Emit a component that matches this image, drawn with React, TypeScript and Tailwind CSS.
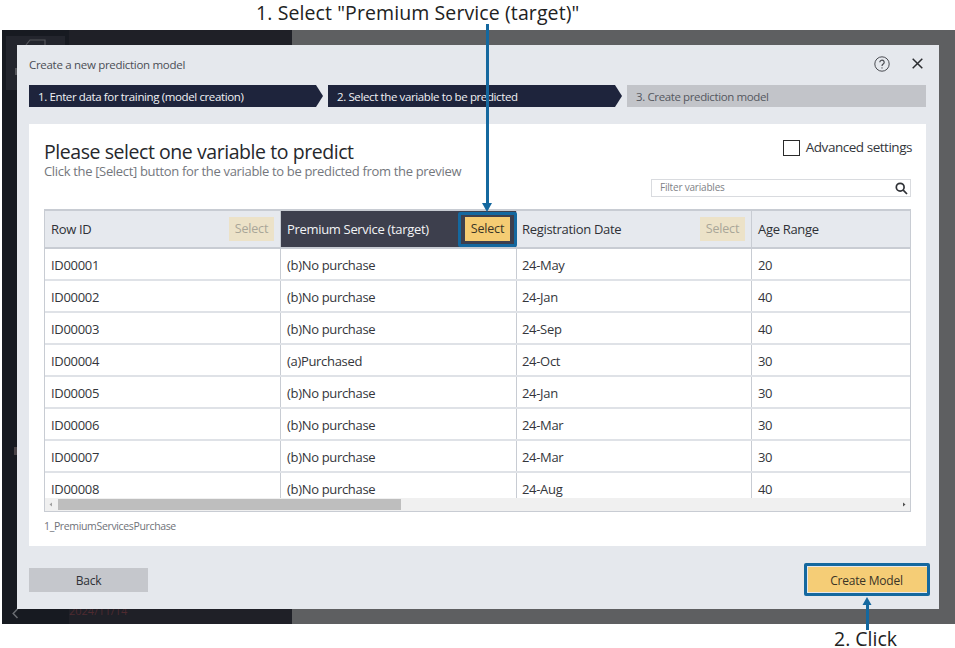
const rows = [
  ["ID00001", "(b)No purchase", "24-May", "20"],
  ["ID00002", "(b)No purchase", "24-Jan", "40"],
  ["ID00003", "(b)No purchase", "24-Sep", "40"],
  ["ID00004", "(a)Purchased", "24-Oct", "30"],
  ["ID00005", "(b)No purchase", "24-Jan", "30"],
  ["ID00006", "(b)No purchase", "24-Mar", "30"],
  ["ID00007", "(b)No purchase", "24-Mar", "30"],
  ["ID00008", "(b)No purchase", "24-Aug", "40"],
];

function Step({ label, last }: { label: string; last?: boolean }) {
  if (last) {
    return (
      <div className="flex h-[22px] w-[299px] items-center bg-[#c2c4c9] pl-[9px] pt-[1px] text-[11.5px] tracking-[-0.38px] text-[#55585f]">{label}</div>
    );
  }
  return (
    <div className="flex h-[22px] w-[294px] items-center bg-[#1e243c] pl-[9px] pt-[1px] text-[11.5px] tracking-[-0.38px] text-[#f0f1f4] [clip-path:polygon(0_0,287px_0,294px_11px,287px_22px,0_22px)]">
      {label}
    </div>
  );
}

function HeaderCell({ label, width, selected, disabled, last, pad }: { label: string; width: string; selected?: boolean; disabled?: boolean; last?: boolean; pad: string }) {
  return (
    <div
      className={`flex h-full shrink-0 items-center justify-between pr-[6px] text-[13px] tracking-[-0.32px] ${pad} ${width} ${selected ? "bg-[#3d3f4d] text-[#f2f3f5]" : "bg-[#e6e9ee] text-[#2f3136]"} ${last ? "" : "border-r border-[#c8ccd3]"}`}
    >
      <span className="pt-[2px]">{label}</span>
      {disabled && (
        <span className="flex h-[24px] w-[45px] items-center justify-center bg-[#ece2c8] text-[12.5px] tracking-[-0.2px] text-[#a9a698]">Select</span>
      )}
      {selected && (
        <span className="flex h-[24px] w-[45px] items-center justify-center bg-[#f5cc73] text-[12.5px] tracking-[-0.2px] text-[#3a3426]">Select</span>
      )}
    </div>
  );
}

function Table() {
  return (
    <div className="mx-[15px] mt-[12px] flex h-[303px] w-[867px] flex-col overflow-hidden border-x border-b border-t-2 border-[#c8ccd3]">
      <div className="flex h-[38px] shrink-0 border-b-2 border-[#c8ccd3]">
        <HeaderCell label="Row ID" width="w-[236px]" pad="pl-[6px]" disabled />
        <HeaderCell label="Premium Service (target)" width="w-[236px]" pad="pl-[6px]" selected />
        <HeaderCell label="Registration Date" width="w-[235px]" pad="pl-[5px]" disabled />
        <HeaderCell label="Age Range" width="w-[158px]" pad="pl-[6px]" last />
      </div>
      <div className="min-h-0 flex-1 overflow-hidden">
        {rows.map((r) => (
          <div key={r[0]} className="flex h-[32px] items-center border-b-2 border-[#dfe2e7] text-[13px] tracking-[-0.32px] text-[#34363b]">
            {r.map((c, i) => (
              <div
                key={i}
                className={`flex h-full shrink-0 items-center pt-[4px] ${i === 2 ? "pl-[5px]" : "pl-[6px]"} ${i === 0 ? "w-[236px]" : i === 1 ? "w-[236px]" : i === 2 ? "w-[235px]" : "w-[158px]"} ${i < 3 ? "border-r border-[#c8ccd3]" : ""}`}
              >
                {c}
              </div>
            ))}
          </div>
        ))}
      </div>
      <div className="flex h-[13px] shrink-0 items-center bg-[#f0f0f0]">
        <svg width="13" height="13" viewBox="0 0 13 13" className="shrink-0"><path d="M7 4.5 4.5 6.5 7 8.5Z" fill="#a0a0a0" /></svg>
        <div className="h-[11px] w-[343px] bg-[#bebebe]" />
        <div className="flex-1" />
        <svg width="13" height="13" viewBox="0 0 13 13" className="shrink-0"><path d="M6 4.5 8.5 6.5 6 8.5Z" fill="#505050" /></svg>
      </div>
    </div>
  );
}

export default function App() {
  return (
    <div className="relative h-[648px] w-[955px] overflow-hidden bg-white font-['Open_Sans','Noto_Sans',sans-serif]">
      <div className="flex h-[30px] pl-[256px]">
        <span className="text-[19.5px] leading-[25px] tracking-[0.1px] text-[#222]">1. Select "Premium Service (target)"</span>
      </div>

      {/* application behind the dialog */}
      <div className="ml-[2px] flex h-[594px]">
        <div className="flex w-[67px] flex-col bg-[#171a21]">
          <div className="ml-[4px] mt-[6px] h-[54px] w-[59px] bg-[#23252d]">
            <svg width="59" height="54" viewBox="0 0 59 54" fill="none" stroke="#55565b" strokeWidth="1.2">
              <path d="M20 9 24 4h15v5" />
              <path d="M10 32v7" strokeWidth="2" />
            </svg>
          </div>
          <div className="ml-[12px] mt-[357px] h-[8px] w-[3px] bg-[#4a4448]" />
          <svg className="ml-[10px] mt-[153px]" width="7" height="11" viewBox="0 0 7 11" fill="none" stroke="#6a6d72" strokeWidth="1.5"><path d="M5.5 1 1.2 5.5l4.3 4.5" /></svg>
        </div>
        <div className="flex w-[223px] flex-col justify-end bg-[#1f2027]">
          <span className="mb-[6px] text-[11px] leading-[14px] text-[#4e2a30]">2024/11/14</span>
        </div>
        <div className="flex-1 bg-[#5e5f61]" />
      </div>

      {/* dialog */}
      <div className="absolute left-[17px] top-[45px] flex h-[564px] w-[922px] flex-col bg-[#e5e8ed] px-[12px]">
        <div className="flex h-[40px] shrink-0 items-center justify-between">
          <span className="text-[11.5px] tracking-[-0.3px] text-[#4b4e55]">Create a new prediction model</span>
          <div className="mr-[4px] mt-[-3px] flex items-center gap-[22px]">
            <svg width="16" height="16" viewBox="0 0 16 16" fill="none" stroke="#4a4c52" strokeWidth="1">
              <circle cx="8" cy="8" r="7.2" />
              <path d="M5.8 6.2a2.2 2.1 0 1 1 3.4 1.8c-.8.5-1.2.9-1.2 1.9" strokeWidth="1.2" />
              <circle cx="8" cy="11.9" r=".7" fill="#4a4c52" stroke="none" />
            </svg>
            <svg width="11" height="11" viewBox="0 0 11 11" stroke="#2a2c30" strokeWidth="1.5"><path d="M.7.7l9.6 9.6M10.3.7.7 10.3" /></svg>
          </div>
        </div>
        <div className="flex shrink-0 gap-[5px]">
          <Step label="1. Enter data for training (model creation)" />
          <Step label="2. Select the variable to be predicted" />
          <Step label="3. Create prediction model" last />
        </div>
        <div className="mt-[17px] flex h-[422px] w-[897px] shrink-0 flex-col bg-white">
          <div className="flex h-[43px] justify-between pl-[15px] pr-[14px] pt-[15px]">
            <div className="flex flex-col pt-[2px]">
              <h1 className="text-[19.5px] leading-[22px] tracking-[-0.44px] text-[#26282c]">Please select one variable to predict</h1>
              <p className="text-[13px] leading-[16px] tracking-[-0.33px] text-[#74777d]">Click the [Select] button for the variable to be predicted from the preview</p>
            </div>
            <div className="flex h-[17px] items-center gap-[6px]">
              <span className="h-[16px] w-[17px] border-[1.5px] border-[#2a2a2a] bg-white" />
              <span className="text-[13.5px] tracking-[-0.47px] text-[#34363b]">Advanced settings</span>
            </div>
          </div>
          <div className="mr-[15px] mt-[12px] flex h-[18px] w-[260px] items-center justify-between self-end border border-[#d9dbdf] pl-[8px] pr-[2px]">
            <span className="mt-[-2px] text-[10px] tracking-[-0.2px] text-[#7e8186]">Filter variables</span>
            <svg width="13" height="13" viewBox="0 0 13 13" fill="none" stroke="#2f3136" strokeWidth="1.7"><circle cx="5.2" cy="5.2" r="3.9" /><path d="M8.2 8.2 12 12" /></svg>
          </div>
          <Table />
          <p className="ml-[15px] mt-[7px] text-[10.5px] leading-[14px] tracking-[-0.35px] text-[#6f7279]">1_PremiumServicesPurchase</p>
        </div>
        <div className="mt-[21px] flex shrink-0 items-center justify-between">
          <div className="flex h-[24px] w-[119px] items-center justify-center bg-[#c5c7cc] pt-[3px] text-[12px] tracking-[-0.2px] text-[#2f3136]">Back</div>
          <div className="flex h-[25px] w-[119px] items-center justify-center bg-[#f5cd76] pr-[2px] pt-[2px] text-[12px] tracking-[-0.2px] text-[#3a3426]">Create Model</div>
        </div>
      </div>

      {/* callouts */}
      <div className="absolute left-[458px] top-[212px] h-[35px] w-[59px] rounded-[2px] border-[3px] border-[#14689f]" />
      <div className="absolute left-[804px] top-[563px] h-[33px] w-[126px] rounded-[2px] border-[3px] border-[#14689f]" />
      <svg className="absolute left-[480px] top-[24px]" width="14" height="188" viewBox="0 0 14 188">
        <path d="M6 0h3v180H6Z" fill="#14689f" />
        <path d="M2 179h10l-5 9Z" fill="#14689f" />
      </svg>
      <svg className="absolute left-[860px] top-[596px]" width="14" height="34" viewBox="0 0 14 34">
        <path d="M6 8h3v26H6Z" fill="#14689f" />
        <path d="M2.5 9h9L7 1Z" fill="#14689f" />
      </svg>
      <span className="absolute left-[834px] top-[629px] text-[19.5px] leading-[19px] text-[#222]">2. Click</span>
    </div>
  );
}
